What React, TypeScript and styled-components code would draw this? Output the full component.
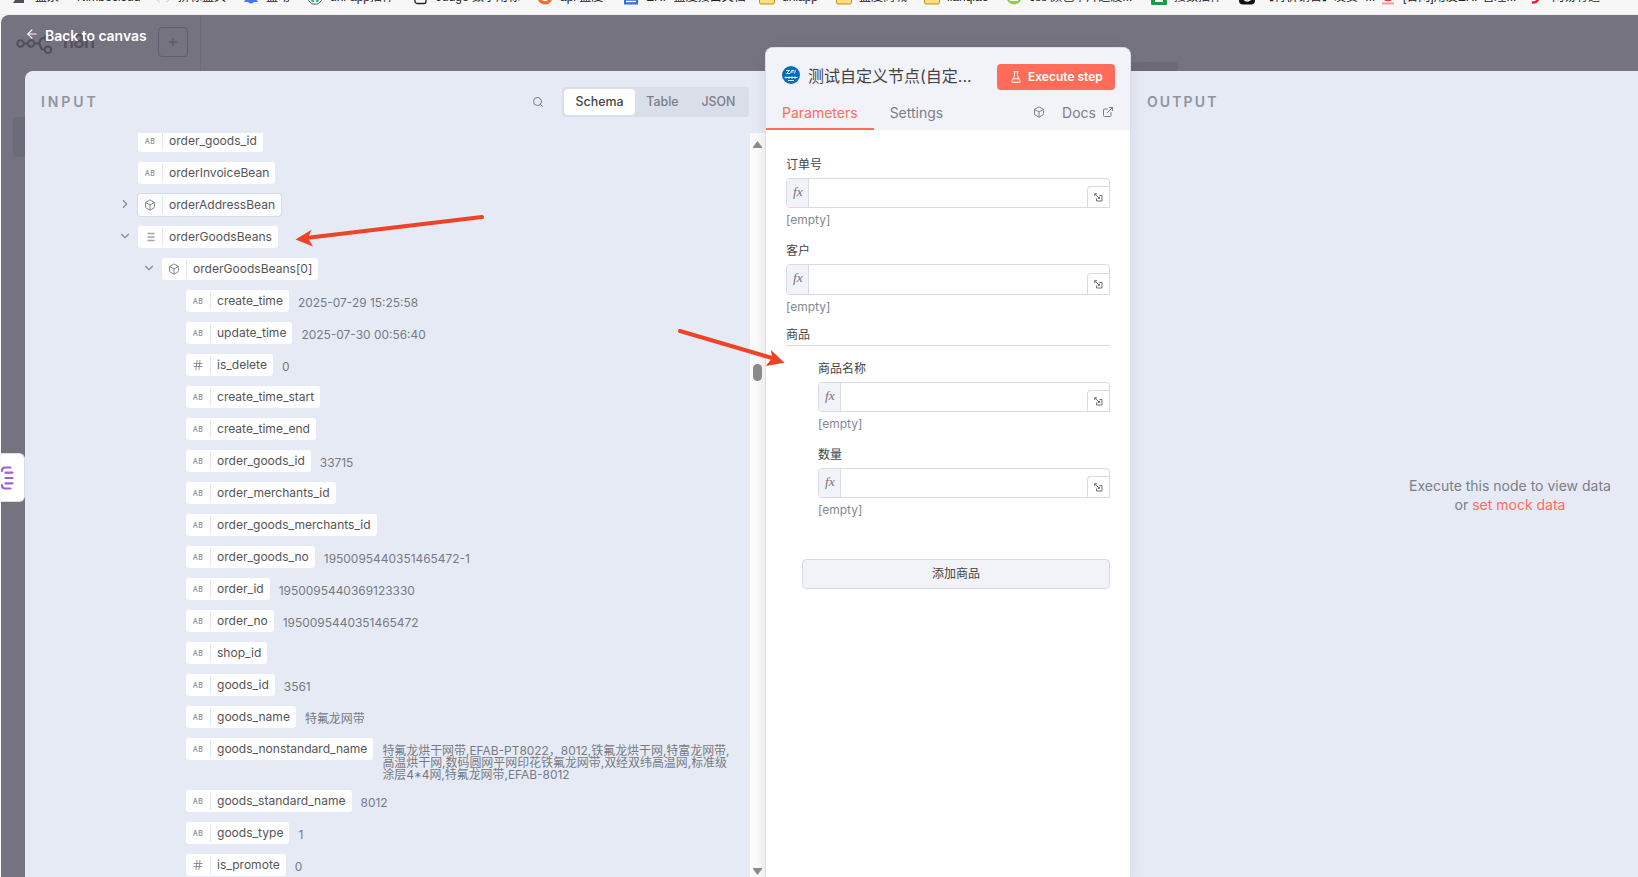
import React from 'react';
import styled, { createGlobalStyle, css } from 'styled-components';
import { ArrowLeft, Box, ChevronDown, ChevronRight, ExternalLink, Hash, Plus, Search } from 'lucide-react';

const Global = createGlobalStyle`
  *, *::before, *::after { box-sizing: border-box; }
  html, body { margin: 0; padding: 0; }
  body {
    width: 1638px;
    height: 877px;
    overflow: hidden;
    font-family: Inter, "Noto Sans CJK SC", sans-serif;
    font-size: 12px;
    color: #555;
  }
  svg { display: block; flex: none; }
`;

const Page = styled.div`
  position: relative;
  display: flex;
  flex-direction: column;
  width: 1638px;
  height: 877px;
  overflow: hidden;
  background: #f7f7f7;
`;

/* ---------- bookmarks bar ---------- */
const Bookmarks = styled.div`
  display: flex;
  height: 15px;
  flex: none;
  overflow: hidden;
  padding-left: 12px;
  background: #f7f7f7;
  border-bottom: 1px solid #ececec;
`;
const Bookmark = styled.div<{ $w: number }>`
  display: flex;
  width: ${p => p.$w}px;
  flex: none;
  margin-top: -12px;
  height: 20px;
  white-space: nowrap;
`;
const BookmarkIcon = styled.span`
  width: 16px;
  height: 17px;
  margin-right: 7px;
  flex: none;
  svg { width: 16px; height: 17px; }
`;
const BookmarkText = styled.span`
  padding-top: 1px;
  font: 12px/17px "Liberation Sans", "Noto Sans CJK SC", sans-serif;
  color: #222;
`;

/* ---------- editor backdrop ---------- */
const Editor = styled.div`
  position: relative;
  display: flex;
  flex-direction: column;
  flex: 1;
  min-height: 0;
  margin-left: 1px;
  background: #75737f;
  border-top-left-radius: 8px;
`;
const TopBar = styled.div`
  display: flex;
  height: 56px;
  flex: none;
`;
const SidebarTop = styled.div`
  position: relative;
  width: 200px;
  height: 56px;
  border-right: 1px solid #6a6979;
`;
const LogoMark = styled.svg`
  position: absolute;
  left: 15px;
  top: 19px;
`;
const LogoText = styled.span`
  position: absolute;
  left: 62px;
  top: 15px;
  font-size: 18px;
  line-height: 24px;
  font-weight: 600;
  letter-spacing: -0.8px;
  color: #504e5c;
`;
const AddButton = styled.div`
  position: absolute;
  left: 157px;
  top: 12px;
  display: flex;
  align-items: center;
  justify-content: center;
  width: 30px;
  height: 30px;
  border: 1px solid #5f5d6d;
  border-radius: 4px;
  color: #555362;
`;
const BackLink = styled.div`
  position: absolute;
  left: 24px;
  top: 12px;
  display: flex;
  gap: 6px;
  color: #fff;
  font-size: 14px;
  line-height: 18px;
  font-weight: 600;
  letter-spacing: -0.05px;
`;
const HiddenTab = styled.div`
  position: absolute;
  left: 1090px;
  top: 47px;
  width: 87px;
  height: 20px;
  border-radius: 4px;
  background: #6b6a78;
`;
const HiddenNav = styled.div`
  position: absolute;
  left: 12px;
  top: 102px;
  width: 30px;
  height: 40px;
  border-radius: 4px;
  background: #6a6b79;
`;
const SideHandle = styled.div`
  position: absolute;
  left: 0;
  top: 438px;
  display: flex;
  align-items: center;
  width: 24px;
  height: 49px;
  background: #fff;
  border: 1px solid #dcdce2;
  border-left: 0;
  border-radius: 0 6px 6px 0;
`;

/* ---------- details view ---------- */
const Details = styled.div`
  position: relative;
  display: flex;
  flex: 1;
  min-height: 0;
  margin-left: 24px;
`;
const InputPanel = styled.section`
  display: flex;
  flex-direction: column;
  width: 740px;
  flex: none;
  background: #e6eaf4;
  border-top-left-radius: 8px;
`;
const PanelHead = styled.header`
  display: flex;
  align-items: center;
  height: 62px;
  flex: none;
  padding: 0 16px;
`;
const PanelTitle = styled.h2<{ $spacing: number }>`
  margin: 0 auto 0 0;
  font-size: 14px;
  line-height: 18px;
  font-weight: 600;
  letter-spacing: ${p => p.$spacing}px;
  color: #91949e;
`;
const Segments = styled.div`
  display: flex;
  margin-left: 18px;
  height: 30px;
  padding: 2px;
  border-radius: 4px;
  background: #dadee9;
`;
const Segment = styled.button<{ $active?: boolean; $w: number }>`
  width: ${p => p.$w}px;
  height: 26px;
  padding: 0;
  border: 0;
  border-radius: 4px;
  font: 500 12.4px/26px Inter, sans-serif;
  color: ${p => (p.$active ? '#444' : '#7b7e88')};
  background: ${p => (p.$active ? '#fff' : 'transparent')};
`;
const ScrollArea = styled.div`
  display: flex;
  flex: 1;
  min-height: 0;
  overflow: hidden;
`;
const Tree = styled.div`
  display: flex;
  flex-direction: column;
  flex: 1;
  gap: 10px;
  margin-top: -3px;
  clip-path: inset(3px 0 0 0);
`;
const Scrollbar = styled.div`
  display: flex;
  flex-direction: column;
  align-items: center;
  width: 15px;
  flex: none;
  padding: 8px 0 2px;
  background: linear-gradient(90deg, #fdfdfd, #f8f8f9);
`;
const Thumb = styled.div`
  width: 9px;
  height: 17px;
  margin: 216px 0 auto;
  border-radius: 5px;
  background: #8b8b8b;
`;
const Row = styled.div<{ $level: number; $tall?: boolean }>`
  display: flex;
  align-items: flex-start;
  height: ${p => (p.$tall ? 42 : 22)}px;
  flex: none;
  padding-left: ${p => 90 + p.$level * 24}px;
`;
const Caret = styled.span`
  display: flex;
  width: 23px;
  height: 20px;
  align-items: center;
  padding-left: 3px;
  color: #858893;
`;
const Pill = styled.div<{ $hover?: boolean }>`
  display: flex;
  align-items: center;
  height: 22px;
  border-radius: 3px;
  background: #fff;
  ${p => p.$hover && css`
    background: #fbfcff;
    box-shadow: 0 0 0 1px #d7dbe8;
  `}
`;
const TypeIcon = styled.span`
  display: flex;
  align-items: center;
  justify-content: center;
  width: 25px;
  height: 18px;
  border-right: 1px solid #e0e5f2;
  font-size: 7px;
  font-weight: 500;
  letter-spacing: 0.4px;
  color: #85878f;
`;
const FieldName = styled.span`
  padding: 0 6px;
  font-size: 12.05px;
  line-height: 20px;
  color: #555;
  white-space: nowrap;
`;
const Value = styled.span`
  margin: 6.5px 0 0 9px;
  width: 352px;
  font-size: 11.95px;
  line-height: 12px;
  color: #777a84;
`;

/* ---------- node panel ---------- */
const NodePanel = styled.section`
  position: relative;
  z-index: 1;
  width: 366px;
  height: 830px;
  flex: none;
  margin-top: -24px;
  background: #fff;
  border: 1px solid #dbdfe9;
  border-bottom: 0;
  border-radius: 8px 8px 0 0;
  box-shadow: 0 4px 16px rgba(90, 96, 130, 0.12);
  overflow: hidden;
`;
const NodeHead = styled.header`
  display: flex;
  flex-direction: column;
  height: 82px;
  background: #f1f3f9;
`;
const TitleRow = styled.div`
  display: flex;
  align-items: center;
  height: 49px;
  padding: 5px 15px 0 16px;
`;
const NodeTitle = styled.h1`
  margin: 1px auto 0 8px;
  font-size: 16px;
  line-height: 24px;
  font-weight: 400;
  color: #444;
`;
const Execute = styled.button`
  display: flex;
  align-items: center;
  gap: 7px;
  width: 118px;
  height: 26px;
  margin-top: 3px;
  padding: 0 0 0 14px;
  border: 0;
  border-radius: 4px;
  background: #ff6d5a;
  color: #fff;
  font: 600 12px/26px Inter, sans-serif;
`;
const Tabs = styled.nav`
  display: flex;
  align-items: stretch;
  height: 33px;
  padding-right: 16px;
`;
const Tab = styled.span<{ $active?: boolean }>`
  padding: 0 16px;
  font-size: 14px;
  line-height: 31px;
  color: ${p => (p.$active ? '#ff6d5a' : '#7b7e88')};
  border-bottom: 2px solid ${p => (p.$active ? '#ff6d5a' : 'transparent')};
`;
const DocsGroup = styled.span`
  display: flex;
  align-items: center;
  height: 31px;
  margin-left: auto;
  font-size: 14px;
  color: #7b7e88;
  svg { margin-bottom: 2px; }
  span { margin: 0 6px 0 17px; }
`;
const Form = styled.div`
  display: flex;
  flex-direction: column;
  padding: 25px 20px 0 20px;
`;
const Field = styled.div<{ $indent?: boolean; $gap?: number }>`
  display: flex;
  flex-direction: column;
  margin-left: ${p => (p.$indent ? 32 : 0)}px;
  margin-bottom: ${p => p.$gap ?? 13}px;
`;
const Label = styled.label`
  height: 23px;
  padding-top: 1px;
  font-size: 12px;
  line-height: 18px;
  color: #444;
`;
const Expression = styled.div<{ $h: number }>`
  display: flex;
  height: ${p => p.$h}px;
  border: 1px solid #d7dbe8;
  border-radius: 4px 4px 0 4px;
  overflow: hidden;
`;
const Fx = styled.span`
  width: 22px;
  padding-left: 6px;
  border-right: 1px solid #d7dbe8;
  background: #f1f3f9;
  font: italic 13.5px/26px "Liberation Serif", serif;
  color: #70737e;
`;
const Expand = styled.span`
  display: flex;
  align-items: center;
  justify-content: center;
  align-self: flex-end;
  width: 22px;
  height: 22px;
  margin: 0 0 -1px auto;
  border: 1px solid #d7dbe8;
  border-right: 0;
  border-radius: 4px 0 0 0;
`;
const Hint = styled.span`
  margin-top: 3px;
  font-size: 12px;
  line-height: 17px;
  color: #85888f;
`;
const GroupTitle = styled.div`
  height: 20px;
  margin: 0 0 13px;
  border-bottom: 1px solid #d7dbe8;
  font-size: 12px;
  line-height: 18px;
  color: #444;
`;
const AddItem = styled.button`
  height: 30px;
  margin: 28px 0 0 16px;
  border: 1px solid #d7dbe8;
  border-radius: 4px;
  background: #f1f3f9;
  font: 12px/26px Inter, "Noto Sans CJK SC", sans-serif;
  color: #444;
`;

/* ---------- output panel ---------- */
const OutputPanel = styled.section`
  display: flex;
  flex-direction: column;
  flex: 1;
  background: #e6eaf4;
`;
const EmptyState = styled.div`
  margin: 343px 0 0 249px;
  width: 260px;
  text-align: center;
  font-size: 14px;
  line-height: 19px;
  color: #7b7e88;
  b { font-weight: 400; color: #ff6d5a; }
`;

const Annotations = styled.svg`
  position: absolute;
  inset: 0;
  z-index: 5;
  pointer-events: none;
`;

type Kind = 'ab' | 'num' | 'obj' | 'list';
interface Item { name: string; kind: Kind; level: number; value?: string; caret?: 'down' | 'right'; hover?: boolean; tall?: boolean }

const items: Item[] = [
  { name: 'order_goods_id', kind: 'ab', level: 0 },
  { name: 'orderInvoiceBean', kind: 'ab', level: 0 },
  { name: 'orderAddressBean', kind: 'obj', level: 0, caret: 'right', hover: true },
  { name: 'orderGoodsBeans', kind: 'list', level: 0, caret: 'down' },
  { name: 'orderGoodsBeans[0]', kind: 'obj', level: 1, caret: 'down' },
  { name: 'create_time', kind: 'ab', level: 2, value: '2025-07-29 15:25:58' },
  { name: 'update_time', kind: 'ab', level: 2, value: '2025-07-30 00:56:40' },
  { name: 'is_delete', kind: 'num', level: 2, value: '0' },
  { name: 'create_time_start', kind: 'ab', level: 2 },
  { name: 'create_time_end', kind: 'ab', level: 2 },
  { name: 'order_goods_id', kind: 'ab', level: 2, value: '33715' },
  { name: 'order_merchants_id', kind: 'ab', level: 2 },
  { name: 'order_goods_merchants_id', kind: 'ab', level: 2 },
  { name: 'order_goods_no', kind: 'ab', level: 2, value: '1950095440351465472-1' },
  { name: 'order_id', kind: 'ab', level: 2, value: '1950095440369123330' },
  { name: 'order_no', kind: 'ab', level: 2, value: '1950095440351465472' },
  { name: 'shop_id', kind: 'ab', level: 2 },
  { name: 'goods_id', kind: 'ab', level: 2, value: '3561' },
  { name: 'goods_name', kind: 'ab', level: 2, value: '特氟龙网带' },
  {
    name: 'goods_nonstandard_name', kind: 'ab', level: 2, tall: true,
    value: '特氟龙烘干网带,EFAB-PT8022，8012,铁氟龙烘干网,特富龙网带,高温烘干网,数码圆网平网印花铁氟龙网带,双经双纬高温网,标准级涂层4*4网,特氟龙网带,EFAB-8012',
  },
  { name: 'goods_standard_name', kind: 'ab', level: 2, value: '8012' },
  { name: 'goods_type', kind: 'ab', level: 2, value: '1' },
  { name: 'is_promote', kind: 'num', level: 2, value: '0' },
];

function KindIcon({ kind }: { kind: Kind }) {
  if (kind === 'ab') return <TypeIcon>AB</TypeIcon>;
  if (kind === 'num') return <TypeIcon><Hash size={12} strokeWidth={1.8} /></TypeIcon>;
  if (kind === 'obj') return <TypeIcon><Box size={12} strokeWidth={2} /></TypeIcon>;
  return (
    <TypeIcon>
      <svg width="10" height="10" viewBox="0 0 10 10">
        <path d="M2.500 1.500h7M2.500 5h7M2.500 8.500h7" stroke="#a2a4ab" strokeWidth="1.4" />
      </svg>
    </TypeIcon>
  );
}

function TreeRow({ item }: { item: Item }) {
  return (
    <Row $level={item.level} $tall={item.tall}>
      <Caret>
        {item.caret === 'down' && <ChevronDown size={14} strokeWidth={2} />}
        {item.caret === 'right' && <ChevronRight size={14} strokeWidth={2} />}
      </Caret>
      <Pill $hover={item.hover}>
        <KindIcon kind={item.kind} />
        <FieldName>{item.name}</FieldName>
      </Pill>
      {item.value && <Value>{item.value}</Value>}
    </Row>
  );
}

function ExpressionField({ label, indent, gap, h = 30 }: { label: string; indent?: boolean; gap?: number; h?: number }) {
  return (
    <Field $indent={indent} $gap={gap}>
      <Label>{label}</Label>
      <Expression $h={h}>
        <Fx>fx</Fx>
        <Expand>
          <svg width="9" height="9" viewBox="0 0 9 9" fill="none" stroke="#6d7078" strokeWidth="1">
            <path d="M5.500 2.500h2.500v5.500H2.500V5.500M.7 3V.7H3M1 1l4.200 4.200M5.500 3.800v1.700H3.800" />
          </svg>
        </Expand>
      </Expression>
      <Hint>[empty]</Hint>
    </Field>
  );
}

const folder = <path d="M.5 3h6l2 2h7v9.500q0 1.500-1.500 1.500H2q-1.500 0-1.500-1.500z" fill="#ffdf80" stroke="#b98f1c" />;

const bookmarks: { w: number; text: string; icon?: React.ReactNode }[] = [
  { w: 65, text: '盘泉', icon: <path d="M1 15l6-9 5 0v9z" fill="#50505a" /> },
  { w: 78, text: 'Nimbecloud' },
  { w: 88, text: '拼标盘具', icon: <path d="M2 12l3 2M11 14l3-2" stroke="#ccc" /> },
  { w: 64, text: '盘动', icon: <path d="M8 2q5 3 5 9l2 3h-4q-3 3-6 0H1l2-3q0-6 5-9" fill="#4776f4" /> },
  { w: 106, text: 'uni-app插件', icon: <><circle cx="8" cy="9" r="7.300" fill="#fff" stroke="#4c6072" /><path d="M4 5v7q0 2 3 2V5zM9 5v9q3 0 3-2V5z" fill="#36b877" /></> },
  { w: 124, text: 'Judge 数字用标', icon: <rect x="2" y="3" width="11" height="12.500" rx="2" fill="none" stroke="#222" strokeWidth="1.300" /> },
  { w: 86, text: 'api 盘度', icon: <><circle cx="8" cy="9" r="7.500" fill="#f26c2a" /><circle cx="8" cy="9" r="3.500" fill="none" stroke="#fff" strokeWidth="1.500" /></> },
  { w: 136, text: 'ERP 盘度接口文档', icon: <><rect x="1" y="2" width="14" height="14.500" fill="#2f6bea" /><path d="M3 13.500h10" stroke="#fff" strokeWidth="1.500" /></> },
  { w: 77, text: 'uniapp', icon: folder },
  { w: 88, text: '盘度商城', icon: folder },
  { w: 82, text: 'lianqiao', icon: folder },
  { w: 145, text: 'css 颜色卡片过渡...', icon: <><circle cx="8" cy="9" r="7.500" fill="#96cc4e" /><path d="M4 12h8" stroke="#fff" strokeWidth="2" /></> },
  { w: 88, text: '接数插件', icon: <><rect y="2" width="16" height="15" rx="1.500" fill="#169c43" /><path d="M4 13h8" stroke="#fff" strokeWidth="2" /></> },
  { w: 141, text: '【特价销售】发货 -...', icon: <><rect y="1" width="16" height="15.500" rx="4" fill="#111" /><path d="M4 10q4 6 9 0" fill="none" stroke="#fff" strokeWidth="1.500" /></> },
  { w: 149, text: '[官网]用友ERP管理...', icon: <><circle cx="8" cy="7" r="6.500" fill="#e93b42" /><path d="M2 15.500h12" stroke="#ee9b9c" strokeWidth="2" /></> },
  { w: 80, text: '网易有道', icon: <path d="M3 14.500q7 1 7-9" fill="none" stroke="#ed1b32" strokeWidth="2.500" /> },
];

export default function App() {
  return (
    <Page>
      <Global />
      <Bookmarks>
        {bookmarks.map(b => (
          <Bookmark key={b.text} $w={b.w}>
            {b.icon && <BookmarkIcon><svg viewBox="0 0 16 17">{b.icon}</svg></BookmarkIcon>}
            <BookmarkText>{b.text}</BookmarkText>
          </Bookmark>
        ))}
      </Bookmarks>

      <Editor>
        <TopBar>
          <SidebarTop>
            <LogoMark width="37" height="22" viewBox="0 0 37 22" fill="none" stroke="#514f5d" strokeWidth="2">
              <circle cx="4.500" cy="9.500" r="3.200" />
              <circle cx="15" cy="9.500" r="3.200" />
              <circle cx="32" cy="4" r="3" />
              <circle cx="32" cy="15.700" r="3.200" />
              <path d="M8 9.500h4M18.500 9.500h3q2 0 2.500-2.500t3-3h2M22 9.500q2 0 2.500 3t2.500 3h2" />
            </LogoMark>
            <LogoText>n8n</LogoText>
            <AddButton><Plus size={12} strokeWidth={2} /></AddButton>
          </SidebarTop>
          <HiddenTab />
          <BackLink><ArrowLeft size={14} strokeWidth={2} /><span>Back to canvas</span></BackLink>
        </TopBar>
        <HiddenNav />

        <Details>
          <InputPanel>
            <PanelHead>
              <PanelTitle $spacing={2.9}>INPUT</PanelTitle>
              <Search size={12} strokeWidth={2} color="#777a84" />
              <Segments>
                <Segment $active $w={71}>Schema</Segment>
                <Segment $w={55}>Table</Segment>
                <Segment $w={57}>JSON</Segment>
              </Segments>
            </PanelHead>
            <ScrollArea>
              <Tree>
                {items.map((item, i) => <TreeRow key={i} item={item} />)}
              </Tree>
              <Scrollbar>
                <svg width="9" height="7" viewBox="0 0 9 7"><path d="M4.500 0L9 6v1H0V6z" fill="#8b8b8b" /></svg>
                <Thumb />
                <svg width="9" height="7" viewBox="0 0 9 7"><path d="M4.500 7L9 1V0H0v1z" fill="#8b8b8b" /></svg>
              </Scrollbar>
            </ScrollArea>
          </InputPanel>

          <NodePanel>
            <NodeHead>
              <TitleRow>
                <svg width="18" height="18" viewBox="0 0 18 18">
                  <circle cx="9" cy="9" r="9" fill="#086bb5" />
                  <path d="M4 4.500h3.500L4.500 7.500H8M8.500 7.500l1-3h3M9 6h2.500M12.500 7.500l1-3M2.500 11.500h13M4 10.500v2M7 10.300v2.600M10 10.300v2.600M13 10.300v2.600M6 14.500h6" fill="none" stroke="#d9ecfa" strokeWidth="1" />
                </svg>
                <NodeTitle>测试自定义节点(自定...</NodeTitle>
                <Execute>
                  <svg width="10" height="12" viewBox="0 0 10 12" fill="none" stroke="#fff" strokeWidth="1">
                    <path d="M2.500.8h5M3.500 1v4L.9 10q-.5 1.300.8 1.300h6.600q1.300 0 .8-1.300L6.500 5V1M2.200 7.800h5.600" />
                  </svg>
                  Execute step
                </Execute>
              </TitleRow>
              <Tabs>
                <Tab $active>Parameters</Tab>
                <Tab>Settings</Tab>
                <DocsGroup>
                  <Box size={12} strokeWidth={2} />
                  <span>Docs</span>
                  <ExternalLink size={12} strokeWidth={2} />
                </DocsGroup>
              </Tabs>
            </NodeHead>
            <Form>
              <ExpressionField label="订单号" gap={13} />
              <ExpressionField label="客户" gap={11} h={31} />
              <GroupTitle>商品</GroupTitle>
              <ExpressionField label="商品名称" indent gap={13} />
              <ExpressionField label="数量" indent />
              <AddItem>添加商品</AddItem>
            </Form>
          </NodePanel>

          <OutputPanel>
            <PanelHead><PanelTitle $spacing={2.1}>OUTPUT</PanelTitle></PanelHead>
            <EmptyState>Execute this node to view data<br />or <b>set mock data</b></EmptyState>
          </OutputPanel>
        </Details>

        <SideHandle>
          <svg width="14" height="26" viewBox="0 0 14 26" fill="none" stroke="#9a63d8" strokeWidth="2.200" strokeLinecap="round">
            <path d="M9.500 2.500H4Q1 2.500 1 6M4.500 7.700h7M4.500 13h7M4.500 18.300h7M9.500 23.500H4Q1 23.500 1 20" />
          </svg>
        </SideHandle>
      </Editor>

      <Annotations width="1638" height="877" viewBox="0 0 1638 877" fill="#ee4326">
        <path d="M482 217L306 238M680 331L772 358" stroke="#ee4326" strokeWidth="4" strokeLinecap="round" />
        <path d="M295.500 239.500L311.500 229.700L308 238L313 246.500z" />
        <path d="M784.500 362.700L771 350L772 358L765.800 366z" />
      </Annotations>
    </Page>
  );
}
